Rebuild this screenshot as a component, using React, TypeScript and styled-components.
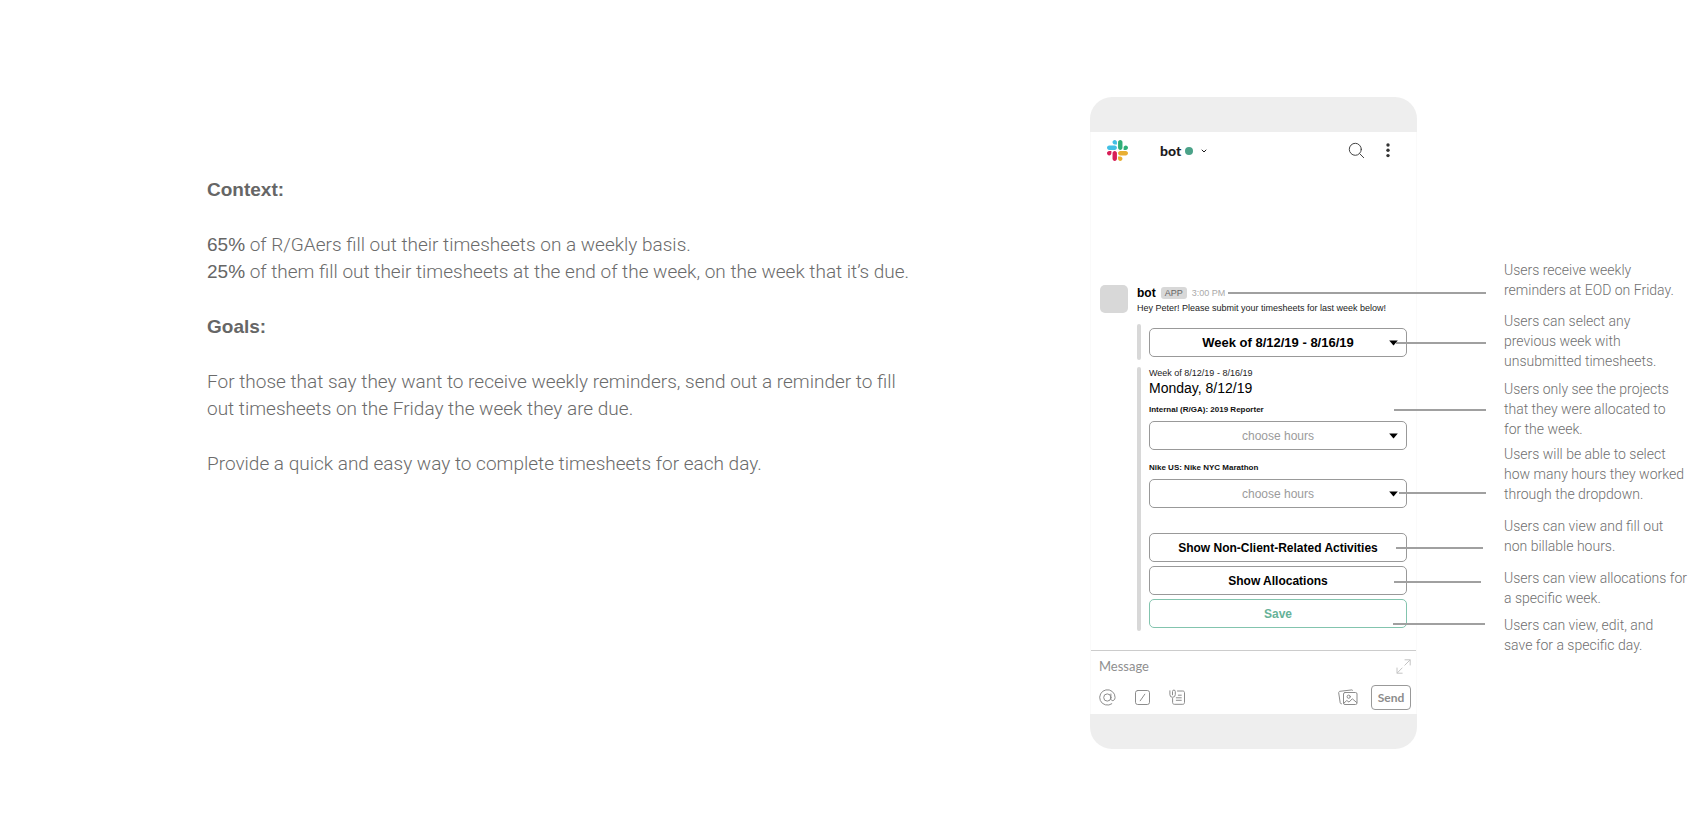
import React from 'react';
import styled, { createGlobalStyle } from 'styled-components';

const GlobalStyle = createGlobalStyle`
  * { box-sizing: border-box; }
  body {
    margin: 0;
    background: #fff;
    font-family: "Liberation Sans", Arial, sans-serif;
  }
  h1, h2, p { margin: 0; }
  button, input, select { font-family: inherit; margin: 0; }
`;

const Page = styled.main`
  display: grid;
  grid-template-columns: minmax(0, 1fr) 327px 189px;
  column-gap: 87px;
  align-items: start;
  min-height: 100vh;
  padding: 97px 13px 91px 207px;
`;

/* Brief */

const Brief = styled.section`
  display: flex;
  flex-direction: column;
  gap: 28px;
  max-width: 720px;
  padding-top: 79px;
  color: #6b6b6b;
  font-size: 19px;
  line-height: 27px;
`;

const BriefHeading = styled.h2`
  color: #666;
  font-size: 19px;
  line-height: 27px;
`;

const BriefText = styled.p`
  font-family: Roboto, "Liberation Sans", sans-serif;
  font-weight: 300;
`;

const Figure = styled.strong`
  font-family: "Liberation Sans", Arial, sans-serif;
  color: #666;
`;

/* Phone */

const Phone = styled.section`
  background: #fff;
`;

const PhoneEnd = styled.div<{ $side: 'top' | 'bottom' }>`
  height: 35px;
  background: #eee;
  border-radius: ${(p) => (p.$side === 'top' ? '22px 22px 0 0' : '0 0 22px 22px')};
`;

const Screen = styled.div`
  border: solid #fafafa;
  border-width: 0 1px;
`;

const ChatHeader = styled.header`
  display: flex;
  align-items: center;
  height: 36px;
  padding: 0 26px 0 16px;
`;

const ChannelButton = styled.button`
  display: flex;
  align-items: center;
  margin: 2px auto 0 32px;
  padding: 0;
  border: 0;
  background: none;
  color: #1d1c1d;
  font: 900 14px/20px Lato, sans-serif;
`;

const Presence = styled.span`
  width: 8px;
  height: 8px;
  margin: 0 8px 0 4px;
  border-radius: 50%;
  background: #4aa288;
`;

const IconButton = styled.button`
  display: flex;
  padding: 0;
  border: 0;
  background: none;
  color: #8c8c8c;
`;

const HeaderActions = styled.div`
  display: flex;
  align-items: center;
  gap: 21px;
`;

const Thread = styled.div`
  display: grid;
  grid-template-columns: 28px 1fr;
  column-gap: 9px;
  padding: 117px 9px 19px;
`;

const Avatar = styled.div`
  height: 28px;
  border-radius: 5px;
  background: #d8d8d8;
`;

const MessageHead = styled.div`
  position: relative;
  display: flex;
  align-items: center;
  height: 15px;
  margin-bottom: 2px;
  font-size: 9px;
`;

const Author = styled.strong`
  font-size: 12px;
  line-height: 16px;
  color: #000;
`;

const AppBadge = styled.span`
  margin: 0 5px;
  padding: 0 4px;
  border-radius: 3px;
  background: #d8d8d8;
  color: #666;
  line-height: 12px;
`;

const Time = styled.time`
  color: #aaa;
  line-height: 12px;
`;

const MessageText = styled.p`
  font-size: 9px;
  line-height: 12px;
  color: #222;
`;

const Attachment = styled.div`
  display: grid;
  grid-template-columns: 4px 1fr;
  column-gap: 8px;
  margin-top: 7px;

  &::before {
    content: "";
    border-radius: 2px;
    background: #d8d8d8;
  }
`;

const Attachments = styled.div`
  padding-top: 3px;
`;

const AttachmentBody = styled.div`
  padding: 4px 0 3px;
`;

const DayHeading = styled.h2`
  font-size: 14px;
  font-weight: 400;
  line-height: 18px;
  color: #000;
`;

const DayRange = styled.p`
  margin-top: -4px;
  font-size: 9px;
  line-height: 12px;
  color: #222;
`;

const FieldLabel = styled.label`
  position: relative;
  display: block;
  margin: 7px 0 5px;
  font-size: 8px;
  font-weight: 700;
  line-height: 12px;
  color: #111;
`;

const SelectBox = styled.div`
  position: relative;
  height: 29px;
`;

const Select = styled.select<{ $strong?: boolean }>`
  appearance: none;
  width: 100%;
  height: 29px;
  padding: 0 22px;
  border: 1px solid #999;
  border-radius: 5px;
  background: #fff;
  color: ${(p) => (p.$strong ? '#000' : '#9b9b9b')};
  font-size: ${(p) => (p.$strong ? '13px' : '12px')};
  font-weight: ${(p) => (p.$strong ? 700 : 400)};
  line-height: 16px;
  text-align: center;
  text-align-last: center;
  opacity: 1;
`;

const Caret = styled.svg`
  position: absolute;
  top: 12px;
  right: 9px;
  pointer-events: none;
`;

const Gap = styled.div`
  height: 5px;
`;

const Actions = styled.div`
  display: grid;
  gap: 4px;
  margin-top: 25px;
`;

const ActionButton = styled.button<{ $save?: boolean }>`
  position: relative;
  height: 29px;
  border: 1px solid ${(p) => (p.$save ? '#83c4ae' : '#999')};
  border-radius: 5px;
  background: #fff;
  color: ${(p) => (p.$save ? '#66b298' : '#000')};
  font-size: 12px;
  font-weight: 700;
  line-height: 16px;
`;

/* Leader lines run over the phone edge towards the notes. */
const Leader = styled.span<{ $top: number; $width: number; $reach?: number }>`
  position: absolute;
  top: ${(p) => p.$top}px;
  right: -${(p) => p.$reach ?? 79}px;
  width: ${(p) => p.$width}px;
  height: 2px;
  background: #a0a0a0;
`;

const Composer = styled.form`
  height: 64px;
  padding: 0 5px 0 8px;
  border-top: 1px solid #ccc;
`;

const ComposerRow = styled.div<{ $height: number }>`
  display: flex;
  align-items: center;
  height: ${(p) => p.$height}px;
`;

const MessageInput = styled.input`
  flex: 1;
  min-width: 0;
  padding: 0;
  border: 0;
  outline: 0;
  background: none;
  font: 400 13px/18px Lato, sans-serif;

  &::placeholder {
    color: #8f8f8f;
    opacity: 1;
  }
`;

const Tools = styled.div`
  display: flex;
  gap: 18px;
  margin-right: auto;
`;

const SendButton = styled.button`
  width: 40px;
  height: 25px;
  margin-left: 13px;
  padding: 0;
  border: 1px solid #999;
  border-radius: 4px;
  background: #fff;
  color: #8c8c8c;
  font: 700 12px/16px Lato, sans-serif;
`;

/* Notes */

const Notes = styled.aside`
  padding-top: 163px;
  color: #6f6f6f;
  font: 300 14px/20px Roboto, "Liberation Sans", sans-serif;
`;

const Note = styled.p<{ $gap?: number }>`
  margin-top: ${(p) => p.$gap ?? 0}px;
`;

function SlackLogo() {
  return (
    <svg width="21" height="21" viewBox="0 0 122.8 122.8" aria-label="Slack">
      <path fill="#d81f58" d="M25.8 77.6c0 7.1-5.8 12.9-12.9 12.9S0 84.7 0 77.6s5.8-12.9 12.9-12.9h12.9v12.9zm6.5 0c0-7.1 5.8-12.9 12.9-12.9s12.9 5.8 12.9 12.9v32.3c0 7.1-5.8 12.9-12.9 12.9s-12.9-5.8-12.9-12.9V77.6z" />
      <path fill="#42bfe4" d="M45.2 25.8c-7.1 0-12.9-5.8-12.9-12.9S38.1 0 45.2 0s12.9 5.8 12.9 12.9v12.9H45.2zm0 6.5c7.1 0 12.9 5.8 12.9 12.9s-5.8 12.9-12.9 12.9H12.9C5.8 58.1 0 52.3 0 45.2s5.8-12.9 12.9-12.9h32.3z" />
      <path fill="#2fae78" d="M97 45.2c0-7.1 5.8-12.9 12.9-12.9s12.9 5.8 12.9 12.9-5.8 12.9-12.9 12.9H97V45.2zm-6.5 0c0 7.1-5.8 12.9-12.9 12.9s-12.9-5.8-12.9-12.9V12.9C64.7 5.8 70.5 0 77.6 0s12.9 5.8 12.9 12.9v32.3z" />
      <path fill="#e8ae32" d="M77.6 97c7.1 0 12.9 5.8 12.9 12.9s-5.8 12.9-12.9 12.9-12.9-5.8-12.9-12.9V97h12.9zm0-6.5c-7.1 0-12.9-5.8-12.9-12.9s5.8-12.9 12.9-12.9h32.3c7.1 0 12.9 5.8 12.9 12.9s-5.8 12.9-12.9 12.9H77.6z" />
    </svg>
  );
}

function DownCaret() {
  return (
    <Caret width="9" height="6" viewBox="0 0 9 6">
      <path d="M0.2 0.5h8.600L4.500 5.600z" fill="#000" />
    </Caret>
  );
}

const line = { fill: 'none', stroke: 'currentColor', strokeLinecap: 'round', strokeLinejoin: 'round' } as const;

function AtIcon() {
  return (
    <svg width="17" height="17" viewBox="0 0 17 17" {...line}>
      <circle cx="8.3" cy="8.5" r="3.6" />
      <path d="M11.9 5v4.800c0 2.800 4.200 2.400 4.200-1.300a7.700 7.700 0 1 0-3.300 6.300" />
    </svg>
  );
}

function SlashIcon() {
  return (
    <svg width="17" height="17" viewBox="0 0 17 17" {...line}>
      <rect x="1.500" y="1.500" width="14" height="14" rx="2.200" />
      <path d="M10.800 5.200l-4.600 6.600" />
    </svg>
  );
}

function ClipIcon() {
  return (
    <svg width="17" height="17" viewBox="0 0 17 17" {...line}>
      <path d="M8.500 2h5.300c1 0 1.700.6 1.700 1.600v10c0 1-.7 1.700-1.700 1.700H5.300c-1 0-1.700-.7-1.700-1.700V9.500" />
      <path d="M.9 1.800v3.800a2.700 2.700 0 0 0 5.400 0V2.500a1.400 1.400 0 0 0-2.800 0v3.300" />
      <path d="M9.300 6.200h3M7.300 8.800h5M7.300 11.300h5" />
    </svg>
  );
}

function PhotosIcon() {
  return (
    <svg width="20" height="17" viewBox="0 0 20 17" {...line}>
      <rect x="5.500" y="3.500" width="13.500" height="12" rx="1.500" />
      <path d="M14.500 1.300L13.900.9 2 2.300c-.9.1-1.400.7-1.300 1.500l1.500 10c.1.700.6 1.100 1.300 1" />
      <circle cx="10.700" cy="7.700" r="1.600" />
      <path d="M5.800 14.200l3-2.700 2.200 1.600 3.300-3.300 4.400 3.700" />
    </svg>
  );
}

function ExpandIcon() {
  return (
    <svg width="15" height="15" viewBox="0 0 15 15" {...line} stroke="#c4c4c4">
      <path d="M9 .8h5.200V6M14 1L8.800 6.200M1 9v5.200h5.200M1.200 14l4.900-5" />
    </svg>
  );
}

export default function App() {
  return (
    <>
      <GlobalStyle />
      <Page>
        <Brief>
          <BriefHeading>Context:</BriefHeading>
          <BriefText>
            <Figure>65%</Figure> of R/GAers fill out their timesheets on a weekly basis.
            <br />
            <Figure>25%</Figure> of them fill out their timesheets at the end of the week, on the week that it’s due.
          </BriefText>
          <BriefHeading>Goals:</BriefHeading>
          <BriefText>
            For those that say they want to receive weekly reminders, send out a reminder to fill
            <br />
            out timesheets on the Friday the week they are due.
          </BriefText>
          <BriefText>Provide a quick and easy way to complete timesheets for each day.</BriefText>
        </Brief>

        <Phone>
          <PhoneEnd $side="top" />
          <Screen>
            <ChatHeader>
              <SlackLogo />
              <ChannelButton type="button">
                bot
                <Presence />
                <svg width="6" height="4" viewBox="0 0 6 4" {...line}>
                  <path d="M1 1l2 2 2-2" />
                </svg>
              </ChannelButton>
              <HeaderActions>
                <IconButton type="button" aria-label="Search">
                  <svg width="17" height="17" viewBox="0 0 17 17" {...line} stroke="#444">
                    <circle cx="7.300" cy="7.300" r="6" />
                    <path d="M11.700 11.700l4 4" />
                  </svg>
                </IconButton>
                <IconButton type="button" aria-label="More">
                  <svg width="4" height="15" viewBox="0 0 4 15" fill="#333">
                    <circle cx="2" cy="2" r="1.700" />
                    <circle cx="2" cy="7.300" r="1.700" />
                    <circle cx="2" cy="12.600" r="1.700" />
                  </svg>
                </IconButton>
              </HeaderActions>
            </ChatHeader>

            <Thread>
              <Avatar />
              <div>
                <MessageHead>
                  <Author>bot</Author>
                  <AppBadge>APP</AppBadge>
                  <Time>3:00 PM</Time>
                  <Leader $top={7} $width={258} />
                </MessageHead>
                <MessageText>Hey Peter! Please submit your timesheets for last week below!</MessageText>
                <Attachments>
                  <Attachment>
                    <AttachmentBody>
                      <SelectBox>
                        <Select $strong aria-label="Week">
                          <option>Week of 8/12/19 - 8/16/19</option>
                        </Select>
                        <DownCaret />
                        <Leader $top={14} $width={90} />
                      </SelectBox>
                    </AttachmentBody>
                  </Attachment>
                  <Attachment>
                    <AttachmentBody>
                      <DayRange>Week of 8/12/19 - 8/16/19</DayRange>
                      <DayHeading>Monday, 8/12/19</DayHeading>
                      <FieldLabel htmlFor="reporter">
                        Internal (R/GA): 2019 Reporter
                        <Leader $top={5} $width={92} />
                      </FieldLabel>
                      <SelectBox>
                        <Select id="reporter">
                          <option>choose hours</option>
                        </Select>
                        <DownCaret />
                      </SelectBox>
                      <Gap />
                      <FieldLabel htmlFor="marathon">Nike US: Nike NYC Marathon</FieldLabel>
                      <SelectBox>
                        <Select id="marathon">
                          <option>choose hours</option>
                        </Select>
                        <DownCaret />
                        <Leader $top={13} $width={87} />
                      </SelectBox>
                      <Actions>
                        <ActionButton type="button">
                          Show Non-Client-Related Activities
                          <Leader $top={13} $width={87} $reach={77} />
                        </ActionButton>
                        <ActionButton type="button">
                          Show Allocations
                          <Leader $top={14} $width={87} $reach={75} />
                        </ActionButton>
                        <ActionButton type="button" $save>
                          Save
                          <Leader $top={23} $width={92} />
                        </ActionButton>
                      </Actions>
                    </AttachmentBody>
                  </Attachment>
                </Attachments>
              </div>
            </Thread>

            <Composer>
              <ComposerRow $height={30}>
                <MessageInput aria-label="Message" placeholder="Message" />
                <IconButton type="button" aria-label="Expand">
                  <ExpandIcon />
                </IconButton>
              </ComposerRow>
              <ComposerRow $height={33}>
                <Tools>
                  <IconButton type="button" aria-label="Mention"><AtIcon /></IconButton>
                  <IconButton type="button" aria-label="Command"><SlashIcon /></IconButton>
                  <IconButton type="button" aria-label="Attach"><ClipIcon /></IconButton>
                </Tools>
                <IconButton type="button" aria-label="Photos"><PhotosIcon /></IconButton>
                <SendButton type="button">Send</SendButton>
              </ComposerRow>
            </Composer>
          </Screen>
          <PhoneEnd $side="bottom" />
        </Phone>

        <Notes>
          <Note>Users receive weekly<br />reminders at EOD on Friday.</Note>
          <Note $gap={11}>Users can select any<br />previous week with<br />unsubmitted timesheets.</Note>
          <Note $gap={8}>Users only see the projects<br />that they were allocated to<br />for the week.</Note>
          <Note $gap={5}>Users will be able to select<br />how many hours they worked<br />through the dropdown.</Note>
          <Note $gap={12}>Users can view and fill out<br />non billable hours.</Note>
          <Note $gap={12}>Users can view allocations for<br />a specific week.</Note>
          <Note $gap={7}>Users can view, edit, and<br />save for a specific day.</Note>
        </Notes>
      </Page>
    </>
  );
}
